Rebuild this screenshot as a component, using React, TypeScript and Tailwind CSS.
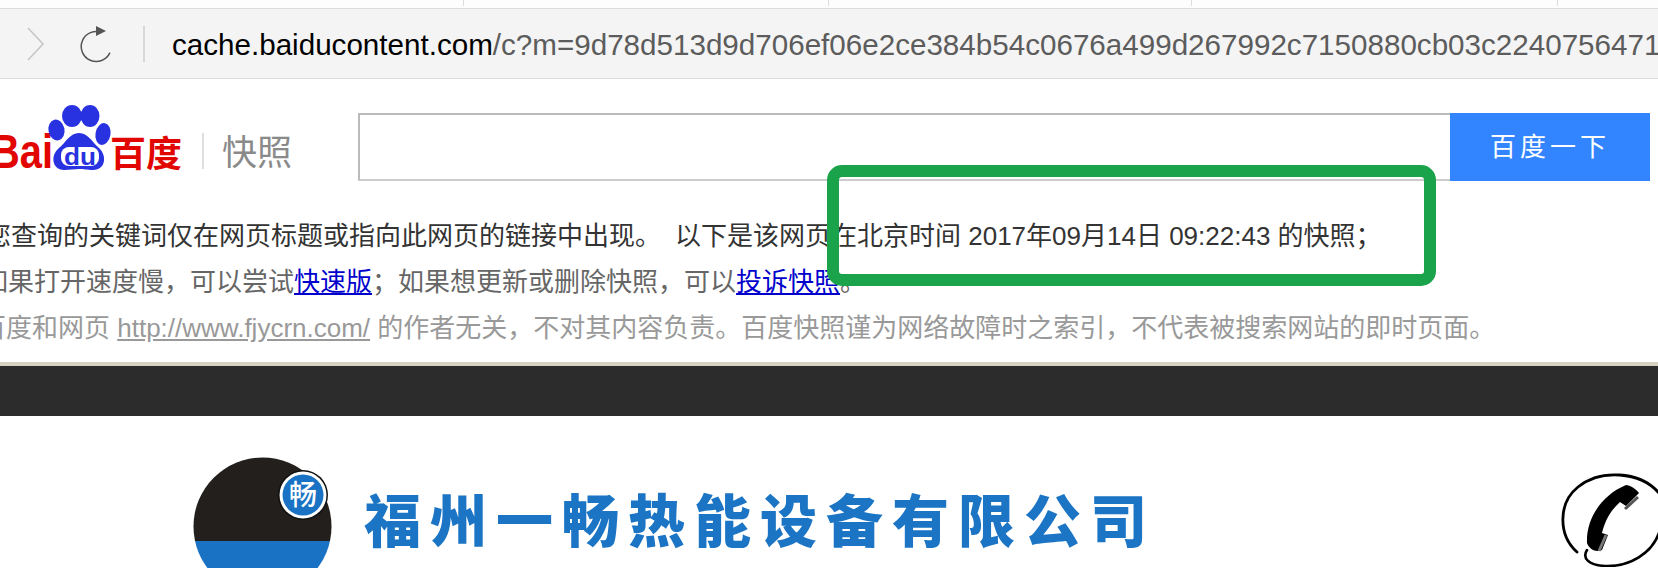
import React from "react";

const SANS = { fontFamily: '"Liberation Sans","Noto Sans CJK SC",sans-serif' };

function BaiduLogo() {
  return (
    <svg width="358" height="68" viewBox="0 113 358 68" className="shrink-0 overflow-visible">
      <text x="-9" y="168" fontSize="48" fontWeight="700" fill="#e10601" fontFamily="Liberation Sans" textLength="62" lengthAdjust="spacingAndGlyphs">Bai</text>
      <ellipse cx="72" cy="116" rx="10" ry="11" fill="#2932e1" />
      <ellipse cx="90" cy="116" rx="9.5" ry="11" fill="#2932e1" />
      <ellipse cx="56.5" cy="130" rx="8" ry="10.5" fill="#2932e1" transform="rotate(-12 56.5 130)" />
      <ellipse cx="103" cy="134" rx="7.5" ry="11" fill="#2932e1" transform="rotate(10 103 134)" />
      <path d="M79 133C88 133 92 142 99 148C107 155 106 170 93 170C87 170 84 169 79 169C74 169 70 170 64 170C52 170 50 155 59 148C66 142 70 133 79 133Z" fill="#2932e1" />
      <rect x="61" y="147" width="38" height="19" rx="8" fill="#ffffff" />
      <text x="64" y="165" fontSize="23" fontWeight="700" fill="#2932e1" fontFamily="Liberation Sans" textLength="32" lengthAdjust="spacingAndGlyphs">du</text>
      <text x="110" y="167" fontSize="36" fontWeight="700" fill="#e10601" fontFamily="Noto Sans CJK SC">百度</text>
      <rect x="202" y="133" width="2" height="36" fill="#dedede" />
      <text x="222" y="165" fontSize="35" fontWeight="400" fill="#8a8a8a" fontFamily="Noto Sans CJK SC">快照</text>
    </svg>
  );
}

function CompanyLogo() {
  return (
    <svg width="139" height="139" viewBox="0 0 139 139" className="shrink-0 overflow-visible">
      <defs>
        <clipPath id="round">
          <circle cx="69.5" cy="69.5" r="69" />
        </clipPath>
      </defs>
      <g clipPath="url(#round)">
        <rect width="139" height="84" fill="#231f1c" />
        <rect y="84" width="139" height="55" fill="#1a72c4" />
      </g>
      <circle cx="110" cy="38" r="25" fill="#111111" />
      <circle cx="110" cy="38" r="23.5" fill="#ffffff" />
      <circle cx="110" cy="38" r="20.5" fill="#1a72c4" />
      <text x="110" y="48" textAnchor="middle" fontSize="28" fontWeight="500" fill="#ffffff" fontFamily="Noto Sans CJK SC">畅</text>
    </svg>
  );
}

function PhoneMark() {
  return (
    <svg width="100" height="94" viewBox="0 0 100 94" className="shrink-0 -mr-[2px]" fill="none">
      <path d="M17 79C-2 62 -2 30 18 14C40 -4 80 -2 99 20" stroke="#000" strokeWidth="2.8" strokeLinecap="round" />
      <path d="M27 77C22 85 28 92 45 93C70 94 92 80 99 60" stroke="#000" strokeWidth="2.6" strokeLinecap="round" />
      <path d="M66 12C70 12 76 16 79 20L66 33L60 29C50 38 45 48 42 60L48 62L42 77C36 80 29 76 27 70C26 45 42 22 66 12Z" fill="#000" />
      <path d="M65 36L78 24" stroke="#555" strokeWidth="3" />
      <path d="M39 78L46 62" stroke="#777" strokeWidth="3" />
    </svg>
  );
}

export default function App() {
  return (
    <div className="relative w-[1658px] h-[568px] overflow-hidden bg-white" style={SANS}>
      {/* tab strip */}
      <div className="flex h-[9px] bg-[#fdfdfd] border-b border-[#dcdcdc]">
        <div className="w-[464px] h-[6px] border-r border-[#dddddd]" />
        <div className="w-[365px] h-[6px] border-r border-[#dddddd]" />
        <div className="w-[363px] h-[6px] border-r border-[#dddddd]" />
        <div className="w-[366px] h-[6px] border-r border-[#dddddd]" />
      </div>

      {/* toolbar */}
      <div className="flex items-center h-[70px] bg-[#f4f4f4] border-b border-[#dcdcdc] overflow-hidden">
        <svg width="20" height="36" viewBox="0 0 20 36" fill="none" className="ml-[26px] shrink-0">
          <path d="M2 2L17 18L2 34" stroke="#c6c6c6" strokeWidth="1.6" />
        </svg>
        <svg width="36" height="38" viewBox="0 0 36 38" fill="none" className="ml-[32px] shrink-0">
          <path d="M17 6.5A15 15 0 1 0 33 21" stroke="#555555" strokeWidth="1.5" transform="rotate(26 18 22)" />
          <path d="M18 1L28 6L18 11Z" fill="#555555" />
        </svg>
        <div className="ml-[29px] w-[2px] h-[36px] bg-[#d8d8d8] shrink-0" />
        <div className="ml-[27px] pt-[3px] whitespace-nowrap text-[29.6px] text-[#5c5c5c] leading-none">
          <span className="text-black">cache.baiducontent.com</span>/c?m=9d78d513d9d706ef06e2ce384b54c0676a499d267992c7150880cb03c2240756471
        </div>
      </div>

      {/* search row */}
      <div className="flex pt-[34px]">
        <BaiduLogo />
        <div className="w-[1092px] h-[68px] bg-white border-t-2 border-l-2 border-b-2 border-t-[#bbbbbb] border-l-[#bbbbbb] border-b-[#cccccc]" />
        <button className="w-[200px] h-[68px] bg-[#3385ff] text-white text-[26px] tracking-[4px]">百度一下</button>
      </div>

      {/* notes */}
      <div className="mt-[32px] whitespace-nowrap text-[26px]">
        <div className="h-[46px] flex items-center -ml-[15px] text-[#333333]">
          您查询的关键词仅在网页标题或指向此网页的链接中出现。<span className="ml-[14px]">以下是该网页在北京时间 2017年09月14日 09:22:43 的快照；</span>
        </div>
        <div className="h-[46px] flex items-center -ml-[18px] text-[#666666]">
          如果打开速度慢，可以尝试<a className="text-[#0000cc] underline">快速版</a>；如果想更新或删除快照，可以<a className="text-[#0000cc] underline">投诉快照</a>。
        </div>
        <div className="h-[46px] flex items-center -ml-[20px] text-[#999999]">
          百度和网页&nbsp;<a className="underline">http://www.fjycrn.com/</a>&nbsp;的作者无关，不对其内容负责。百度快照谨为网络故障时之索引，不代表被搜索网站的即时页面。
        </div>
      </div>

      {/* dark band */}
      <div className="mt-[11px] h-[4px] bg-[#d6d2c4]" />
      <div className="h-[50px] bg-[#2c2c2c]" />

      {/* company header */}
      <div className="flex items-start pt-[41px] pl-[193px]">
        <CompanyLogo />
        <div
          className="ml-[32px] mt-[24px] text-[57px] leading-[72px] tracking-[9px] font-black text-[#1b75c4] whitespace-nowrap"
          style={{ fontFamily: '"Noto Sans CJK SC",sans-serif' }}
        >
          福州一畅热能设备有限公司
        </div>
        <div className="ml-auto mt-[16px]">
          <PhoneMark />
        </div>
      </div>

      {/* annotation */}
      <div className="absolute left-[827px] top-[165px] w-[609px] h-[121px] border-[12px] border-[#1aa34a] rounded-[15px]" />
    </div>
  );
}
